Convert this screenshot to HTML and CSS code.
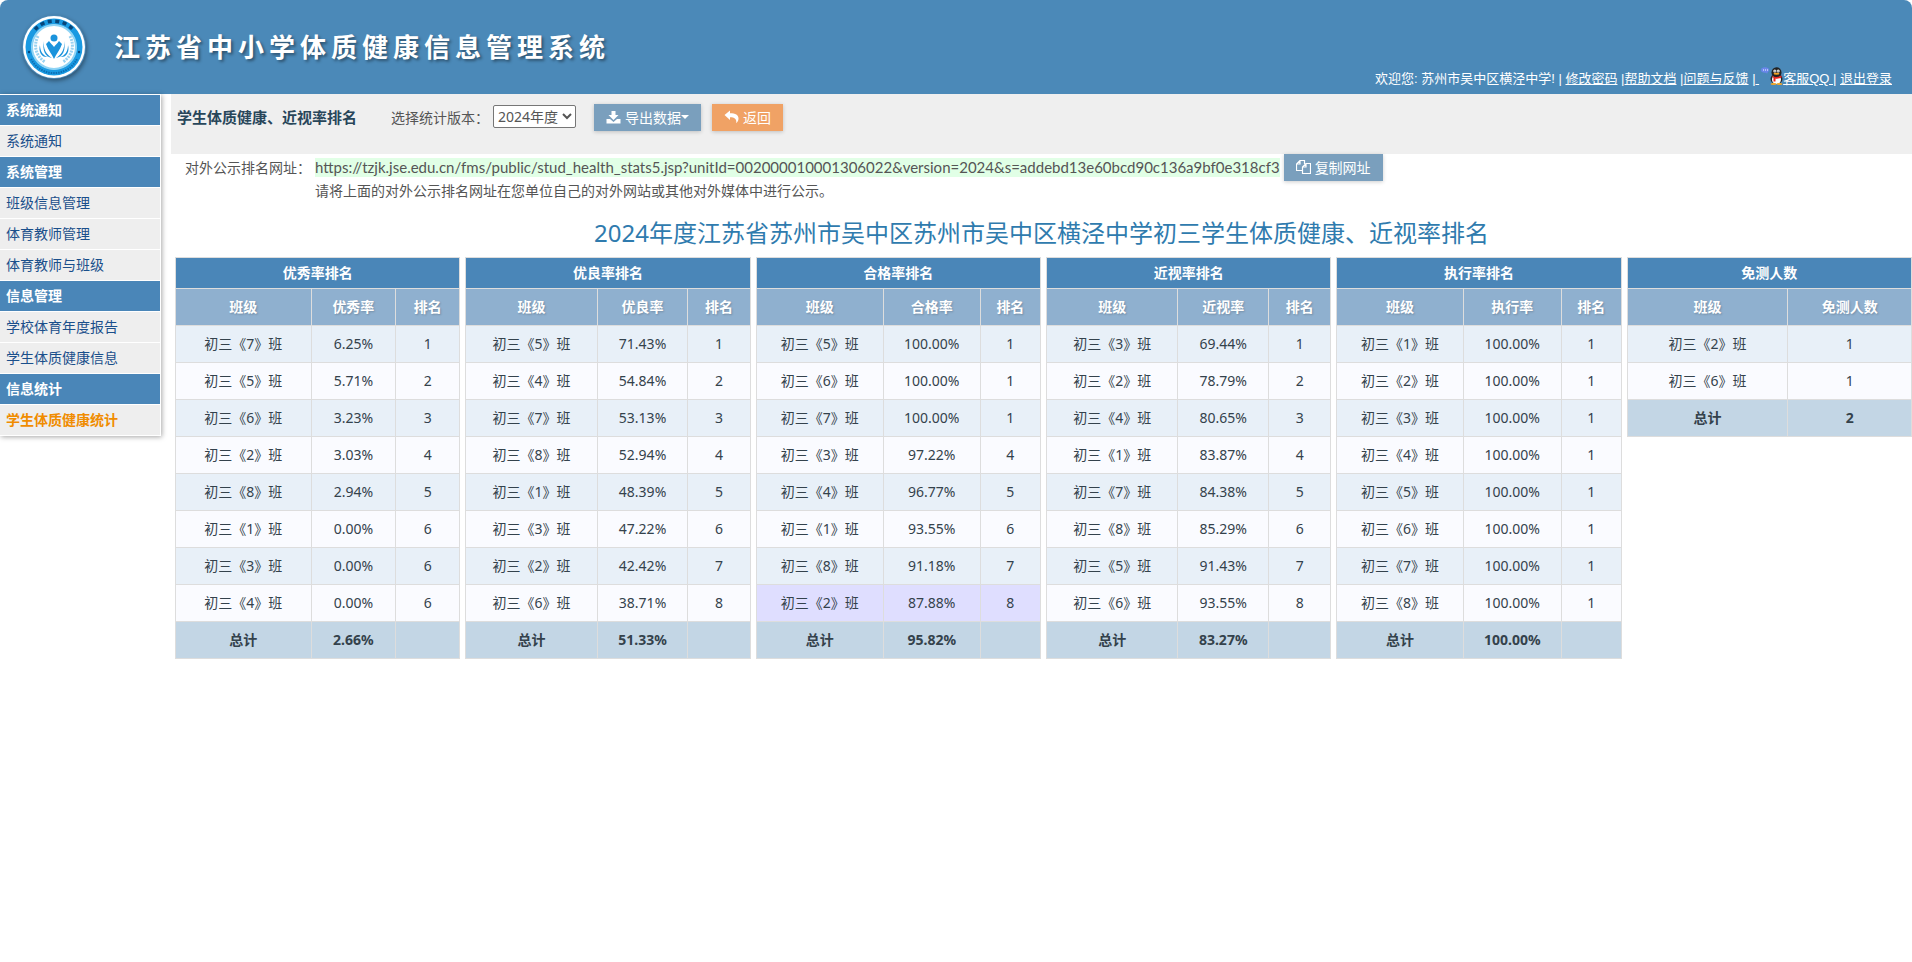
FILE: index.html
```
<!DOCTYPE html>
<html lang="zh-CN">
<head>
    <meta charset="UTF-8">
    <meta name="viewport" content="width=device-width, initial-scale=1.0">
    <title>江苏省中小学体质健康信息管理系统</title>
    <link rel="stylesheet" href="styles.css">
</head>
<body>
    <header class="header">
        <div class="brand">
            <svg class="logo" viewBox="0 0 64 64" aria-hidden="true">
                <circle cx="32" cy="32" r="31" fill="#fff"/>
                <circle cx="32" cy="32" r="28.5" fill="#1a9ae2"/>
                <path d="M13 14.500A25.800 25.800 0 0 1 51 14.500" fill="none" stroke="#07467a" stroke-width="3.500" stroke-dasharray="4 3.500"/>
                <path d="M9 44A25.800 25.800 0 0 0 55 44" fill="none" stroke="#0d6fb4" stroke-width="2" stroke-dasharray="1.500 1"/>
                <circle cx="7" cy="37" r="1.200" fill="#07467a"/>
                <circle cx="57" cy="37" r="1.200" fill="#07467a"/>
                <circle cx="32" cy="32" r="22.500" fill="#fff"/>
                <circle cx="32" cy="32" r="22" fill="none" stroke="#8fd4f5" stroke-width="2"/>
                <path d="M16 21c-5 10-2 20 7 26M48 21c5 10 2 20-7 26" fill="none" stroke="#9ad2f0" stroke-width="3" stroke-dasharray="2 1"/>
                <circle cx="32" cy="23" r="3.500" fill="#1a93dc"/>
                <path d="M32 44c-2-5-6-9-8-15l3-3c2 3 4 4 5 6 1-2 3-3 5-6l3 3c-2 6-6 10-8 15z" fill="#1a93dc"/>
                <path d="M22 26c-1 8 2 13 8 17-7-1-10-8-8-17zM42 26c1 8-2 13-8 17 7-1 10-8 8-17z" fill="#1a93dc"/>
                <path d="M18 30c0 6 3 11 8 12-6 1-10-5-8-12zM46 30c0 6-3 11-8 12 6 1 10-5 8-12z" fill="#1a93dc"/>
            </svg>
            <h1 class="site-name">江苏省中小学体质健康信息管理系统</h1>
        </div>
        <div class="user-bar">
            <span>欢迎您: 苏州市吴中区横泾中学! | </span><a href="#">修改密码</a><span> |</span><a href="#">帮助文档</a><span> |</span><a href="#">问题与反馈</a><span> |</span><a href="#">&nbsp;<svg class="qq" viewBox="0 0 22 18" aria-hidden="true">
                    <ellipse cx="4" cy="3" rx="4" ry="2.800" fill="#6a86ea"/>
                    <path d="M5 5l1 2 1-3z" fill="#6a86ea"/>
                    <path d="M2 3h1M4 3h1M6 3h1" stroke="#fff"/>
                    <ellipse cx="15.500" cy="12" rx="6" ry="5" fill="#222"/>
                    <ellipse cx="15.500" cy="12.500" rx="4.500" ry="4.500" fill="#fff"/>
                    <ellipse cx="15.500" cy="5.500" rx="5" ry="5.200" fill="#222"/>
                    <circle cx="13.800" cy="4" r="1.500" fill="#fff"/><circle cx="17.200" cy="4" r="1.500" fill="#fff"/>
                    <circle cx="14" cy="4" r=".6"/><circle cx="17" cy="4" r=".6"/>
                    <ellipse cx="15.500" cy="6.800" rx="3" ry="1" fill="#f5a623"/>
                    <path d="M10.500 8.500q5 3 10 0v2q-4.500 2-6 1v3h-2v-3.500z" fill="#e8231c"/>
                    <ellipse cx="12.500" cy="17" rx="3" ry="1" fill="#f5a623"/><ellipse cx="18.500" cy="17" rx="3" ry="1" fill="#f5a623"/>
                </svg>客服QQ </a><span>| </span><a href="#">退出登录</a>
        </div>
    </header>

    <div class="layout">
        <nav class="sidebar">
            <h2>系统通知</h2>
            <a href="#">系统通知</a>
            <h2>系统管理</h2>
            <a href="#">班级信息管理</a>
            <a href="#">体育教师管理</a>
            <a href="#">体育教师与班级</a>
            <h2>信息管理</h2>
            <a href="#">学校体育年度报告</a>
            <a href="#">学生体质健康信息</a>
            <h2>信息统计</h2>
            <a href="#" class="active">学生体质健康统计</a>
        </nav>

        <main class="main">
            <div class="toolbar">
                <h2 class="page-title">学生体质健康、近视率排名</h2>
                <label for="version">选择统计版本：</label>
                <select id="version" class="version">
                    <option>2024年度</option>
                </select>
                <button type="button" class="btn btn-export">
                    <svg class="icon" viewBox="0 0 14 14" aria-hidden="true"><path d="M5 1h4v4h3L7 10 2 5h3zM0 9h3.500L7 12l3.500-3H14v4.500H0z" fill="currentColor"/></svg>
                    <span>导出数据</span><i class="caret"></i>
                </button>
                <button type="button" class="btn btn-back">
                    <svg class="icon" viewBox="0 0 14 14" aria-hidden="true"><path d="M0 5l5.500-4.500v2.700C11 3.200 14 5 14 8.500c0 2-1 3.500-2.300 4.800C12.500 9 10 7.300 5.500 7.300V10z" fill="currentColor"/></svg>
                    <span>返回</span>
                </button>
            </div>

            <div class="publish">
                <span class="publish-label">对外公示排名网址：</span>
                <div class="publish-body">
                    <div class="publish-row">
                        <span class="url" id="url">https://tzjk.jse.edu.cn/fms/public/stud_health_stats5.jsp?unitId=002000010001306022&amp;version=2024&amp;s=addebd13e60bcd90c136a9bf0e318cf3</span>
                        <button type="button" class="btn btn-copy">
                            <svg class="icon" viewBox="0 0 15 14" aria-hidden="true"><path d="M6 10.500H.5V4L4 .5h4.500V4M4 .5V4H.5M10 3.500h4.500v10H6.500V7zM10 3.500V7H6.500" fill="none" stroke="currentColor" stroke-width="1.200"/></svg>
                            <span>复制网址</span>
                        </button>
                    </div>
                    <p class="publish-tip">请将上面的对外公示排名网址在您单位自己的对外网站或其他对外媒体中进行公示。</p>
                </div>
            </div>

            <h2 class="report-title">2024年度江苏省苏州市吴中区苏州市吴中区横泾中学初三学生体质健康、近视率排名</h2>
            <div class="tables" id="tables"></div>
        </main>
    </div>

    <script src="script.js"></script>
</body>
</html>
```
FILE: styles.css
```
* {
    box-sizing: border-box;
}
html {
    background: #fff;
}
body {
    margin: 0;
    font-family: "Noto Sans", "Noto Sans CJK SC", sans-serif;
    font-size: 14px;
    line-height: 20px;
    color: #555;
}
h1, h2, p {
    margin: 0;
}
button, select {
    font-family: inherit;
    font-size: 14px;
}

/* header */
.header {
    display: flex;
    justify-content: space-between;
    height: 94px;
    padding: 0 20px 0 22px;
    background: #4b89b8;
    color: #fff;
    border-radius: 8px 8px 0 0;
}
.brand {
    display: flex;
    align-items: center;
    gap: 28px;
}
.logo {
    width: 64px;
    height: 64px;
    border-radius: 50%;
    box-shadow: 1px 2px 4px rgba(0, 0, 0, 0.4);
}
.site-name {
    font-size: 26px;
    font-weight: bold;
    letter-spacing: 5px;
    text-shadow: 2px 2px 3px rgba(0, 0, 0, 0.4);
}
.user-bar {
    align-self: flex-end;
    padding-bottom: 5px;
    font-family: "Liberation Sans", "Noto Sans CJK SC", sans-serif;
    font-size: 13px;
    white-space: nowrap;
}
.user-bar a {
    color: #fff;
}
.qq {
    width: 22px;
    height: 18px;
    margin-left: 2px;
    vertical-align: -2px;
}

.layout {
    display: flex;
    align-items: flex-start;
    gap: 10px;
}

/* left menu */
.sidebar {
    flex: none;
    width: 161px;
    padding-top: 1px;
    border-right: 1px solid #fff;
    box-shadow: 1px 1px 5px rgba(0, 0, 0, 0.35);
    background: #fff;
}
.sidebar h2, .sidebar a {
    display: block;
    height: 31px;
    padding-left: 6px;
    border-bottom: 1px solid #fff;
    font-size: 14px;
    line-height: 30px;
    background: #eee;
    color: #1a4f8b;
    text-decoration: none;
}
.sidebar h2 {
    background: #4a86b8;
    color: #fff;
}
.sidebar a.active {
    color: #f08c00;
    font-weight: bold;
}

.main {
    flex: 1;
    min-width: 0;
}
.toolbar {
    display: flex;
    align-items: flex-start;
    height: 60px;
    padding: 10px 6px;
    background: #efefef;
}
.toolbar label {
    line-height: 27px;
}
.page-title {
    margin-right: 34px;
    font-size: 15px;
    line-height: 27px;
    color: #28465a;
}
.version {
    width: 83px;
    height: 23px;
    margin: 1px 18px 0 4px;
    padding: 0;
    border: 1px solid #767676;
    border-radius: 2px;
    background: #fff;
    color: #555;
}

.btn {
    display: flex;
    flex: none;
    align-items: center;
    gap: 4px;
    height: 27px;
    padding: 0 12px 2px;
    border: none;
    background: #7a9fbd;
    color: #fff;
    box-shadow: 0 1px 4px rgba(0, 0, 0, 0.2);
    cursor: pointer;
}
.btn-export {
    margin-right: 11px;
}
.btn-back {
    background: #f0a265;
}
.icon {
    width: 15px;
    height: 14px;
}
.caret {
    margin-left: -4px;
    border: 4px solid transparent;
    border-top-color: #fff;
    border-bottom: none;
}

/* public address */
.publish {
    display: flex;
    padding-left: 14px;
}
.publish-label {
    width: 130px;
    line-height: 27px;
}
.publish-row {
    display: flex;
    align-items: center;
    gap: 4px;
}
.url {
    font-family: Lato, sans-serif;
    font-size: 15px;
    line-height: 19px;
    background: #e1ffe6;
}
.publish-tip {
    line-height: 20px;
}

.report-title {
    margin: 16px 0 8px;
    font-size: 24px;
    font-weight: normal;
    line-height: 32px;
    text-align: center;
    color: #2f7bae;
}

/* ranking tables */
.tables {
    display: grid;
    grid-template-columns: repeat(6, 1fr);
    align-items: start;
    gap: 5px;
    padding-left: 4px;
}
.rank {
    width: 100%;
    border-collapse: collapse;
    text-align: center;
    color: #34424c;
}
.rank th, .rank td {
    height: 37px;
    padding: 0 8px;
    border: 1px solid #ddd;
}
.rank .rank-name {
    height: 31px;
    background: #4a86b8;
    color: #fff;
}
.rank .cols th {
    background: #8fb0cf;
    color: #fff;
    text-shadow: 1px 1px 2px rgba(0, 0, 0, 0.2);
}
.rank tbody tr {
    background: #fafbff;
}
.rank tbody tr:nth-child(odd) {
    background: #e8f0f8;
}
.rank tbody tr.current {
    background: #dfdeff;
}
.rank tfoot td {
    background: #c3d6e5;
    font-weight: bold;
}
```
FILE: script.js
```
// each row: class number, value, rank
const tables = [
    { name: '优秀率排名', cols: ['班级', '优秀率', '排名'], total: ['2.66%', ''],
      rows: [[7, '6.25%', 1], [5, '5.71%', 2], [6, '3.23%', 3], [2, '3.03%', 4], [8, '2.94%', 5], [1, '0.00%', 6], [3, '0.00%', 6], [4, '0.00%', 6]] },
    { name: '优良率排名', cols: ['班级', '优良率', '排名'], total: ['51.33%', ''],
      rows: [[5, '71.43%', 1], [4, '54.84%', 2], [7, '53.13%', 3], [8, '52.94%', 4], [1, '48.39%', 5], [3, '47.22%', 6], [2, '42.42%', 7], [6, '38.71%', 8]] },
    { name: '合格率排名', cols: ['班级', '合格率', '排名'], total: ['95.82%', ''], current: 7,
      rows: [[5, '100.00%', 1], [6, '100.00%', 1], [7, '100.00%', 1], [3, '97.22%', 4], [4, '96.77%', 5], [1, '93.55%', 6], [8, '91.18%', 7], [2, '87.88%', 8]] },
    { name: '近视率排名', cols: ['班级', '近视率', '排名'], total: ['83.27%', ''],
      rows: [[3, '69.44%', 1], [2, '78.79%', 2], [4, '80.65%', 3], [1, '83.87%', 4], [7, '84.38%', 5], [8, '85.29%', 6], [5, '91.43%', 7], [6, '93.55%', 8]] },
    { name: '执行率排名', cols: ['班级', '执行率', '排名'], total: ['100.00%', ''],
      rows: [[1, '100.00%', 1], [2, '100.00%', 1], [3, '100.00%', 1], [4, '100.00%', 1], [5, '100.00%', 1], [6, '100.00%', 1], [7, '100.00%', 1], [8, '100.00%', 1]] },
    { name: '免测人数', cols: ['班级', '免测人数'], total: ['2'],
      rows: [[2, 1], [6, 1]] }
];

function cells(tag, values) {
    return values.map(v => `<${tag}>${v}</${tag}>`).join('');
}

document.getElementById('tables').innerHTML = tables.map(t => `
    <table class="rank">
        <thead>
            <tr><th class="rank-name" colspan="${t.cols.length}">${t.name}</th></tr>
            <tr class="cols">${cells('th', t.cols)}</tr>
        </thead>
        <tbody>
            ${t.rows.map(([no, ...rest], i) => `<tr${i === t.current ? ' class="current"' : ''}>${cells('td', [`初三《${no}》班`, ...rest])}</tr>`).join('')}
        </tbody>
        <tfoot>
            <tr>${cells('td', ['总计', ...t.total])}</tr>
        </tfoot>
    </table>`).join('');

document.querySelector('.btn-copy').addEventListener('click', () => {
    navigator.clipboard.writeText(document.getElementById('url').textContent);
});
```
